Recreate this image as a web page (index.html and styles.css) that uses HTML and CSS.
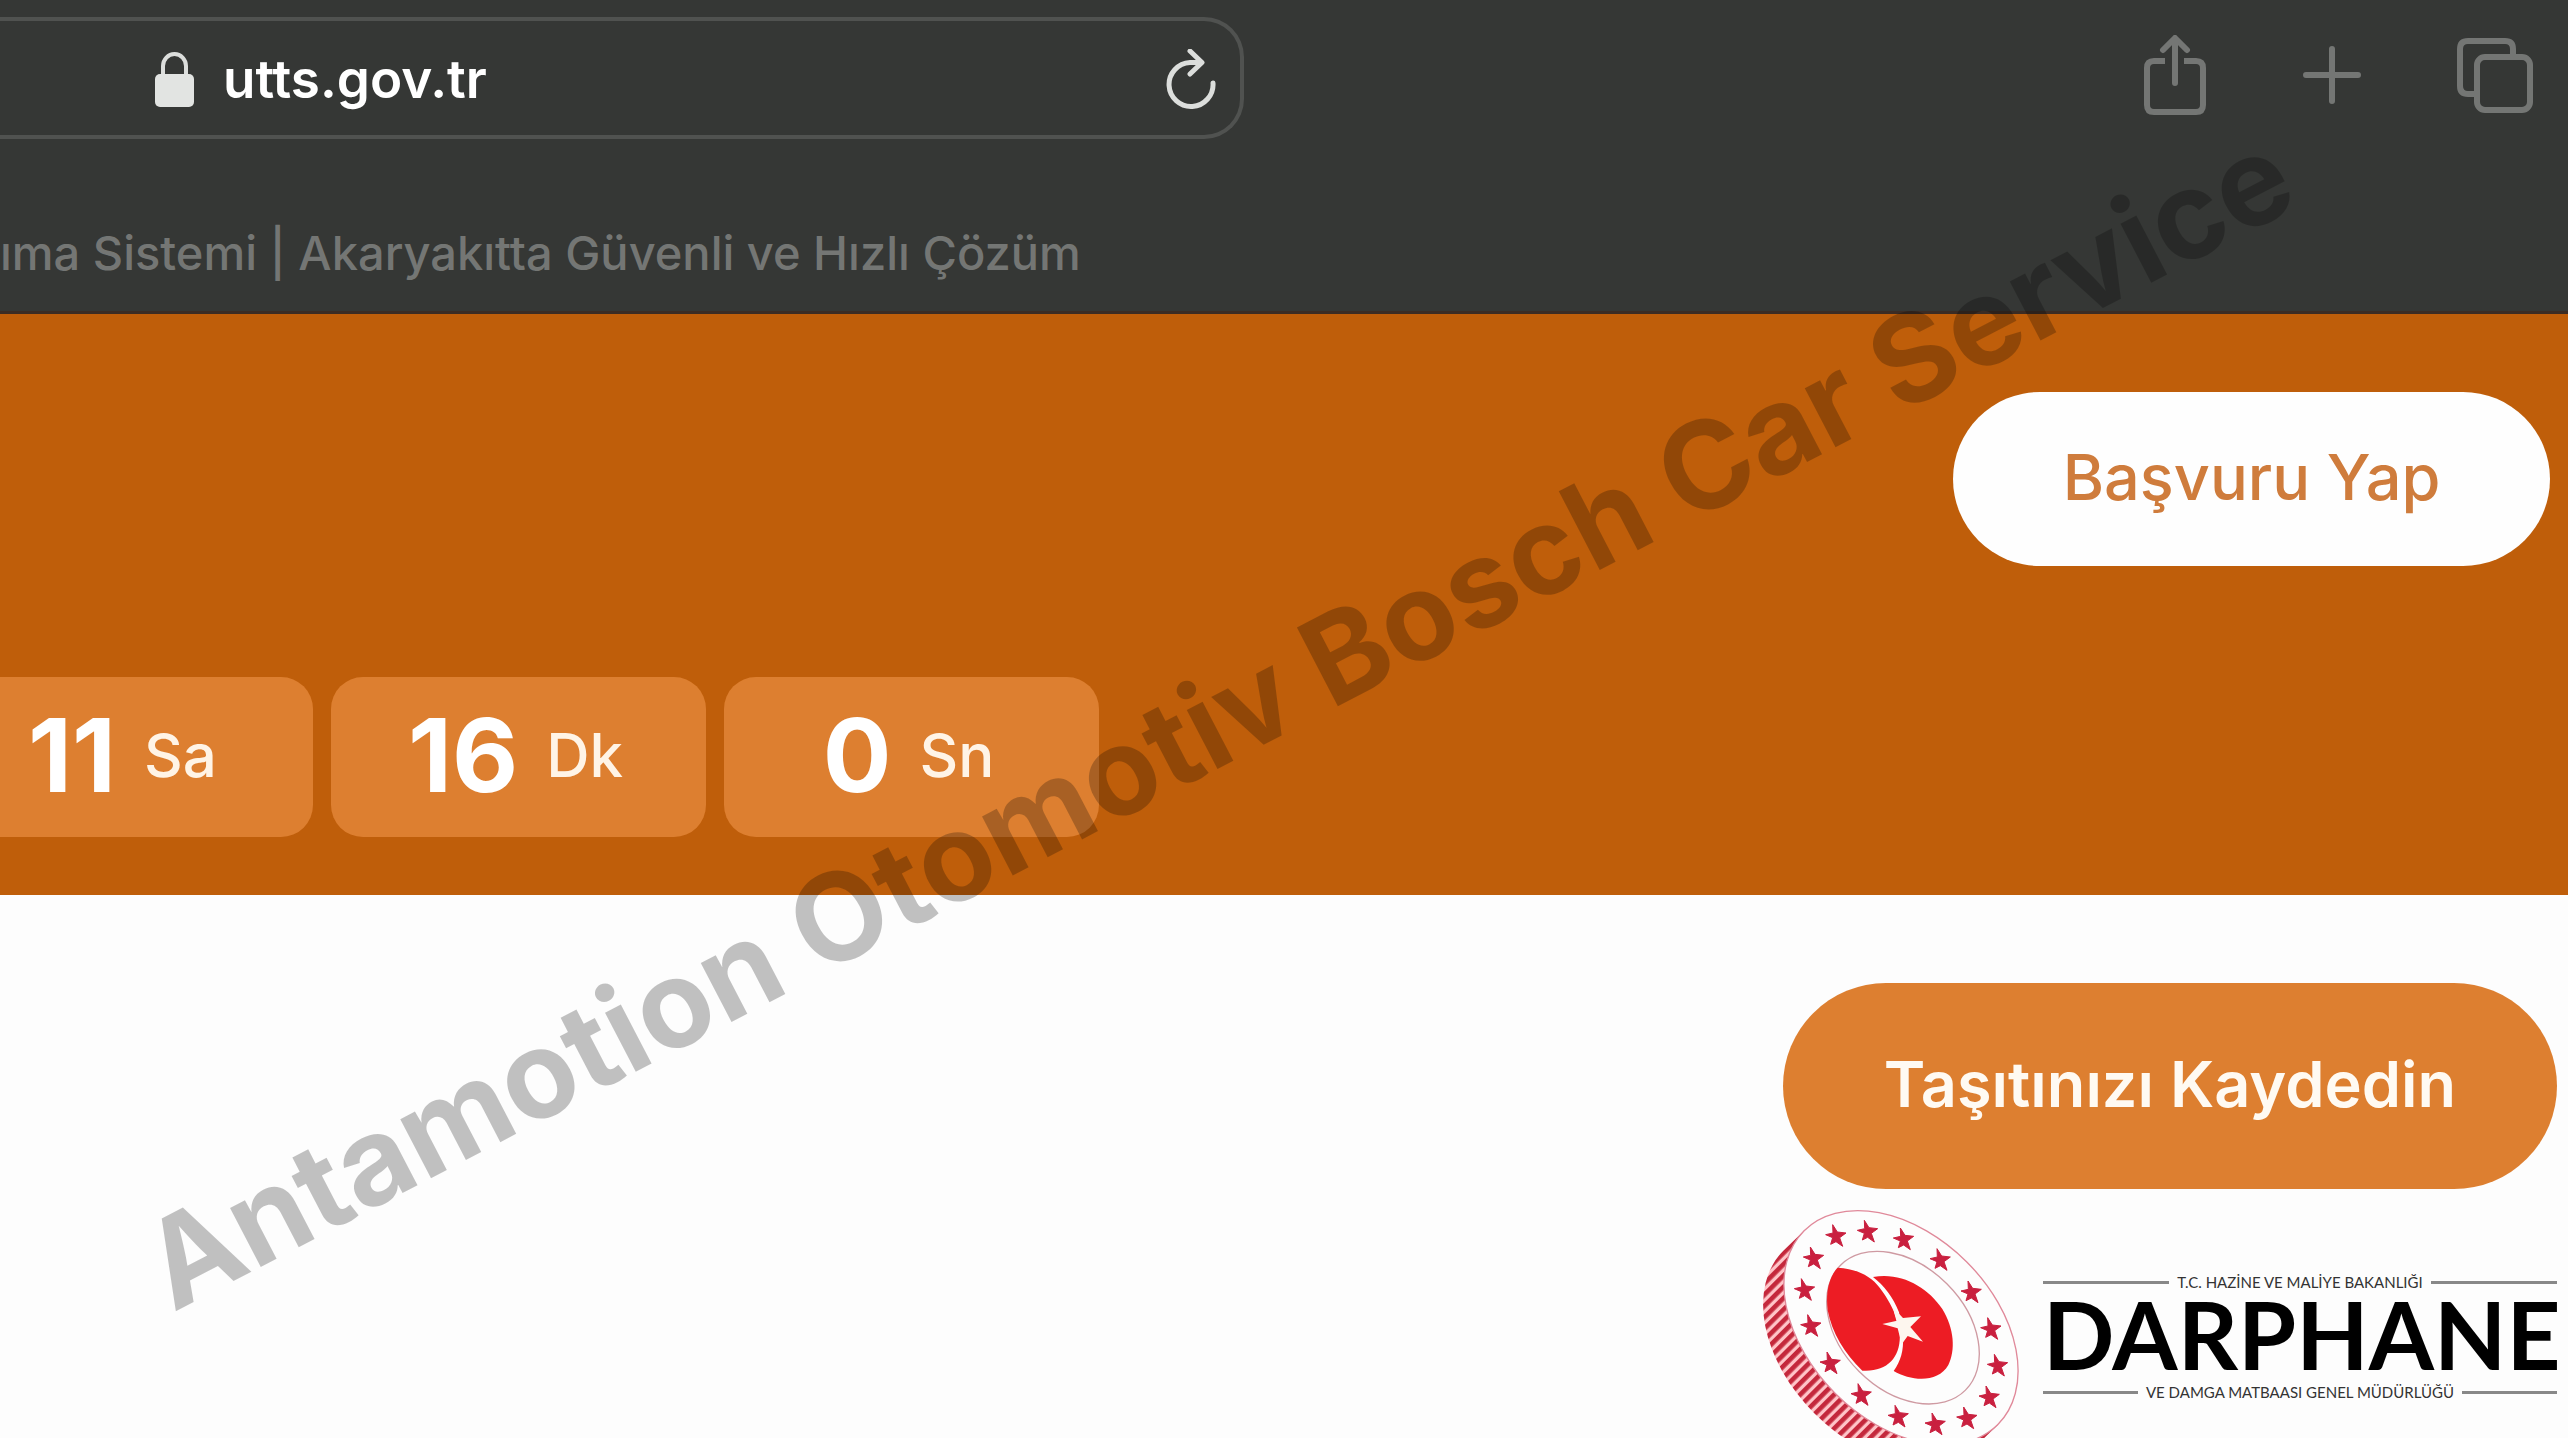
FILE: index.html
```html
<!DOCTYPE html>
<html lang="tr">
<head>
  <meta charset="UTF-8" />
  <title>Taşıt Tanıma Sistemi | Akaryakıtta Güvenli ve Hızlı Çözüm</title>
  <link rel="stylesheet" href="styles.css">
</head>
<body>
  <div class="browser">
    <div class="toolbar">
      <form class="address">
        <svg class="lock" viewBox="0 0 41 56" aria-hidden="true">
          <path d="M9 25V15a11.500 12 0 0 1 23 0v10" fill="none" stroke="#dcdedc" stroke-width="4"/>
          <rect x="1" y="23" width="39" height="33" rx="5" fill="#e2e4e2"/>
        </svg>
        <input class="url" type="text" value="utts.gov.tr" aria-label="Adres" />
        <button class="icon-btn" type="button" aria-label="Yenile">
          <svg class="reload" viewBox="0 0 52 60" aria-hidden="true">
            <g fill="none" stroke="#dcdedc" stroke-width="5" stroke-linecap="round" stroke-linejoin="round">
              <path d="M36 13.500H26A22 22 0 1 0 49 34"/>
              <path d="M26 2L38 13.500L26 25"/>
            </g>
          </svg>
        </button>
      </form>
      <div class="actions">
        <button class="icon-btn" type="button" aria-label="Paylaş">
          <svg class="share" viewBox="0 0 64 80" aria-hidden="true">
            <g fill="none" stroke="#747674" stroke-width="6" stroke-linecap="round" stroke-linejoin="round">
              <path stroke-linecap="butt" d="M22 26H11Q4 26 4 33V70Q4 77 11 77H53Q60 77 60 70V33Q60 26 53 26H41"/>
              <path d="M32 48V4M20 15L32 3L44 15"/>
            </g>
          </svg>
        </button>
        <button class="icon-btn" type="button" aria-label="Yeni sekme">
          <svg class="plus" viewBox="0 0 58 58" aria-hidden="true">
            <path d="M3 29H55M29 3V55" stroke="#747674" stroke-width="6" stroke-linecap="round"/>
          </svg>
        </button>
        <button class="icon-btn" type="button" aria-label="Sekmeler">
          <svg class="tabs" viewBox="0 0 76 76" aria-hidden="true">
            <g fill="none" stroke="#747674" stroke-width="6">
              <path d="M56 18V12Q56 4 48 4H11Q3 4 3 12V49Q3 57 11 57H20"/>
              <rect x="20" y="20" width="53" height="53" rx="8"/>
            </g>
          </svg>
        </button>
      </div>
    </div>
    <div class="tab-title">ıma Sistemi | Akaryakıtta Güvenli ve Hızlı Çözüm</div>
  </div>

  <header class="hero">
    <button class="apply-btn" type="button">Başvuru Yap</button>
    <div class="countdown">
      <div class="time-box"><span class="num">11</span><span class="unit">Sa</span></div>
      <div class="time-box"><span class="num">16</span><span class="unit">Dk</span></div>
      <div class="time-box"><span class="num">0</span><span class="unit">Sn</span></div>
    </div>
  </header>

  <main class="content">
    <button class="register-btn" type="button">Taşıtınızı Kaydedin</button>
    <div class="brand">
      <svg class="coin" viewBox="60 56 780 690" aria-hidden="true">
        <defs>
          <pattern id="ridge" width="24" height="24" patternUnits="userSpaceOnUse" patternTransform="rotate(45)">
            <rect width="24" height="24" fill="#ffc4c8"/>
            <rect width="14" height="24" fill="#c4283c"/>
          </pattern>
          <polygon id="star" points="-12,-35 2,-13 28,-10 9,4 18,30 -2,16 -18,24 -12,4 -33,-5 -11,-10"/>
        </defs>
        <!-- coin edge -->
        <path d="M189 121L127 181A411 279 45 0 0 709 763L771 703Z" fill="url(#ridge)"/>
        <!-- coin face -->
        <ellipse cx="480" cy="412" rx="411" ry="279" transform="rotate(45 480 412)" fill="#fdfdfd" stroke="#e0899a" stroke-width="4"/>
        <ellipse cx="486" cy="412" rx="265" ry="186" transform="rotate(45 486 412)" fill="#fdfdfd" stroke="#cf9aa2" stroke-width="4"/>
        <g fill="#c9203f" stroke="#c9203f" stroke-width="3">
          <use href="#star" x="382" y="125"/>
          <use href="#star" x="490" y="148"/>
          <use href="#star" x="600" y="210"/>
          <use href="#star" x="693" y="307"/>
          <use href="#star" x="752" y="417"/>
          <use href="#star" x="772" y="527"/>
          <use href="#star" x="747" y="622"/>
          <use href="#star" x="680" y="685"/>
          <use href="#star" x="585" y="703"/>
          <use href="#star" x="474" y="680"/>
          <use href="#star" x="363" y="615"/>
          <use href="#star" x="270" y="520"/>
          <use href="#star" x="212" y="408"/>
          <use href="#star" x="193" y="300"/>
          <use href="#star" x="220" y="205"/>
          <use href="#star" x="287" y="138"/>
        </g>
        <g fill="#ed1c24">
          <path d="M290 232C350 236 390 258 416 292C436 318 448 340 458 362L476 425C482 500 440 546 364 541C310 490 272 425 260 360C254 310 262 262 290 232Z"/>
          <path d="M396 260C480 244 560 290 604 356C640 415 644 480 622 524C590 580 510 572 458 542C480 512 488 480 486 440L474 366C456 320 430 286 396 260Z"/>
        </g>
        <polygon points="455,350 486,383 540,378 508,410 546,454 500,437 482,462 470,414 424,401 468,391" fill="#fdf6ee"/>
      </svg>
      <div class="wordmark">
        <div class="rule-row">T.C. HAZİNE VE MALİYE BAKANLIĞI</div>
        <div class="name">DARPHANE</div>
        <div class="rule-row">VE DAMGA MATBAASI GENEL MÜDÜRLÜĞÜ</div>
      </div>
    </div>
  </main>

  <div class="watermark">Antamotion Otomotiv Bosch Car Service</div>
</body>
</html>
```
FILE: styles.css
```css
* {
  box-sizing: border-box;
}

body {
  margin: 0;
  height: 100vh;
  display: flex;
  flex-direction: column;
  position: relative;
  overflow: hidden;
  font-family: Inter, "Liberation Sans", sans-serif;
  background: #fdfdfd;
}

button {
  border: none;
  font-family: inherit;
  cursor: pointer;
}

svg {
  display: block;
}

/* browser chrome */
.browser {
  background: #353735;
  border-bottom: 3px solid #3c2c24;
}

.toolbar {
  display: flex;
  justify-content: space-between;
  align-items: center;
  padding: 17px 35px 0 0;
}

.address {
  display: flex;
  align-items: center;
  width: 49.1%;
  height: 122px;
  padding: 2px 24px 0 154px;
  border: 4px solid #505250;
  border-left: none;
  border-radius: 0 40px 40px 0;
}

.lock {
  width: 41px;
  height: 56px;
}

.url {
  flex: 1;
  min-width: 0;
  margin-left: 28px;
  padding: 0;
  border: none;
  outline: none;
  background: none;
  color: #fff;
  font: 600 53px Inter, "Liberation Sans", sans-serif;
}

.icon-btn {
  padding: 0;
  background: none;
}

.reload {
  width: 52px;
  height: 60px;
}

.actions {
  display: flex;
  align-items: center;
  gap: 96px;
  padding-bottom: 6px;
}

.share {
  width: 64px;
  height: 80px;
}

.plus {
  width: 58px;
  height: 58px;
}

.tabs {
  width: 76px;
  height: 76px;
}

.tab-title {
  padding: 84px 0 28px;
  color: #747674;
  font-size: 47px;
  font-weight: 500;
  line-height: 60px;
  white-space: nowrap;
}

/* orange header */
.hero {
  background: #bf5e0a;
  padding: 78px 18px 58px 0;
}

.apply-btn {
  display: block;
  margin-left: auto;
  width: 597px;
  height: 174px;
  padding-bottom: 6px;
  border-radius: 88px;
  background: #fefefe;
  color: #cf7c3c;
  font-size: 63px;
  font-weight: 500;
}

.countdown {
  display: flex;
  gap: 18px;
  margin: 111px 0 0 -62px;
}

.time-box {
  display: flex;
  justify-content: center;
  align-items: center;
  gap: 28px;
  width: 375px;
  height: 160px;
  padding: 0 6px 4px 0;
  border-radius: 32px;
  background: #dd7f30;
  color: #fff;
}

.num {
  font-size: 102px;
  font-weight: 700;
}

.unit {
  font-size: 60px;
  font-weight: 500;
  color: #fff4e6;
}

/* page body */
.content {
  flex: 1;
  display: flex;
  flex-direction: column;
  align-items: flex-end;
  padding: 88px 11px 0 0;
}

.register-btn {
  width: 774px;
  height: 206px;
  padding-bottom: 6px;
  border-radius: 103px;
  background: #dd7f30;
  color: #fffaf2;
  font-size: 63px;
  font-weight: 600;
}

.brand {
  display: flex;
  align-items: center;
  gap: 22px;
  margin-top: 20px;
}

.coin {
  width: 260px;
  height: 230px;
}

.wordmark {
  width: 514px;
  padding-top: 26px;
  font-family: Lato, "Liberation Sans", sans-serif;
  color: #000;
}

.rule-row {
  display: flex;
  align-items: center;
  gap: 8px;
  font-size: 15px;
  line-height: 20px;
  color: #333;
  white-space: nowrap;
}

.rule-row::before,
.rule-row::after {
  content: "";
  flex: 1;
  height: 3px;
  background: #888;
}

.name {
  padding-bottom: 6px;
  font-size: 94px;
  font-weight: 700;
  line-height: 84px;
  text-align: center;
}

.watermark {
  position: absolute;
  top: 50%;
  left: 47.4%;
  transform: translate(-50%, -50%) rotate(-27.5deg);
  color: rgba(0, 0, 0, 0.24);
  font-size: 122px;
  font-weight: 700;
  white-space: nowrap;
  pointer-events: none;
}
```
